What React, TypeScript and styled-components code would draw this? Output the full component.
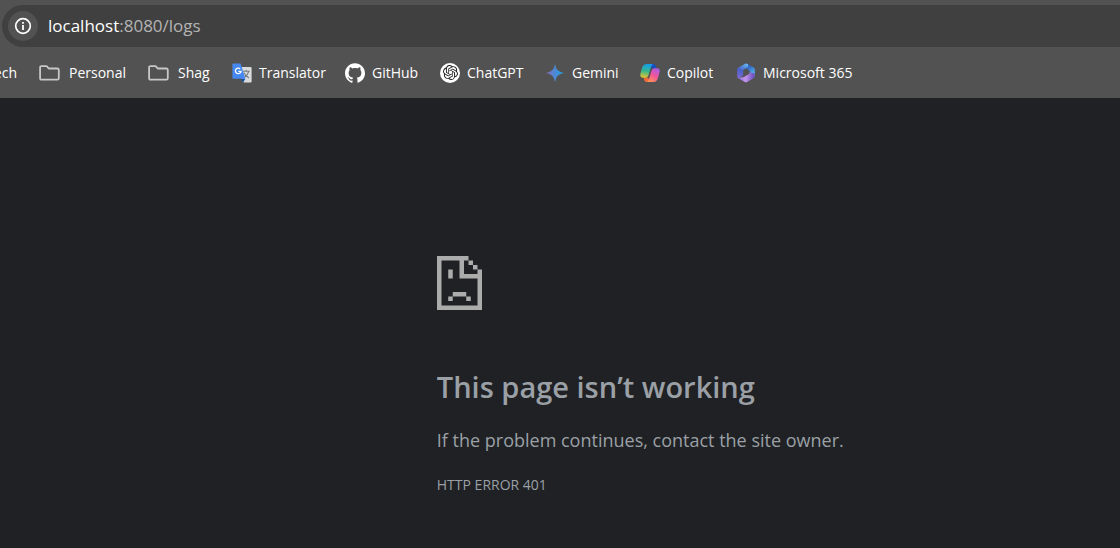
import React from "react";
import styled, { createGlobalStyle } from "styled-components";
import { SiGithub, SiOpenai } from "react-icons/si";

const GlobalStyle = createGlobalStyle`
  * { box-sizing: border-box; }
  body {
    margin: 0;
    background: #202124;
    font-family: "Segoe UI", "Open Sans", "Noto Sans", sans-serif;
  }
`;

const Browser = styled.div`
  min-height: 100vh;
  overflow-x: hidden;
`;

const Chrome = styled.header`
  background: #525252;
  padding-top: 5px;
`;

const AddressBar = styled.form`
  display: flex;
  align-items: center;
  gap: 10px;
  height: 42px;
  margin-left: 2px;
  padding-left: 6px;
  background: #404040;
  border-radius: 21px 0 0 21px;
`;

const SiteInfo = styled.button`
  display: grid;
  place-items: center;
  width: 30px;
  height: 30px;
  padding: 0;
  border: 0;
  border-radius: 50%;
  background: #525252;
  color: #fff;
`;

const Url = styled.div`
  color: #b4b4b4;
  font-size: 17px;
  line-height: 24px;
`;

const Host = styled.span`
  color: #fff;
`;

const Bookmarks = styled.nav`
  display: flex;
  align-items: center;
  height: 51px;
`;

const Bookmark = styled.a<{ $width: number; $gap?: number }>`
  display: flex;
  flex: 0 0 ${(p) => p.$width}px;
  align-items: center;
  gap: ${(p) => p.$gap ?? 7}px;
  color: #fff;
  font-size: 14px;
  line-height: 20px;
  white-space: nowrap;
  text-decoration: none;

  svg { flex: none; }
`;

const ClippedBookmark = styled(Bookmark)`
  justify-content: flex-end;
  padding-right: 22px;
  overflow: hidden;
`;

const Disc = styled.span`
  display: grid;
  place-items: center;
  width: 20px;
  height: 20px;
  border-radius: 50%;
  background: #fff;
  color: #222;
`;

const ErrorPage = styled.main`
  margin-left: 39%;
  padding: 158px 24px 24px 0;
  color: #9aa0a6;

  svg { display: block; }
`;

const Title = styled.h1`
  margin: 55px 0 0;
  font-size: 29px;
  font-weight: 600;
  line-height: 44px;
`;

const Message = styled.p`
  margin: 18px 0 0;
  font-size: 18px;
  line-height: 26px;
`;

const ErrorCode = styled.p`
  margin: 22px 0 0;
  font-size: 14px;
  line-height: 20px;
`;

const InfoIcon = () => (
  <svg width="18" height="18" viewBox="0 0 18 18" aria-hidden="true">
    <circle cx="9" cy="9" r="7.3" fill="none" stroke="currentColor" strokeWidth="1.7" />
    <path d="M8.1 8h1.8v5H8.1zM8.1 5h1.8v1.8H8.1z" fill="currentColor" />
  </svg>
);

const FolderIcon = () => (
  <svg width="21" height="16" viewBox="0 0 21 16" fill="none" stroke="#c7c7c7" strokeWidth="1.8" aria-hidden="true">
    <path d="M2.6 1.1h5l2.3 2.4h8.5q1.4 0 1.4 1.4v8.3q0 1.5-1.4 1.5H2.6q-1.5 0-1.5-1.5V2.6q0-1.5 1.5-1.5z" />
  </svg>
);

const TranslateIcon = () => (
  <svg width="20" height="20" viewBox="0 0 20 20" aria-hidden="true">
    <path d="M8 4h10.6q1 0 1 1v13.6q0 1-1 1h-7z" fill="#d9dadb" />
    <path d="M10.7 8.3h7M14.2 7v1.3M16.6 8.6q-1 4-4.2 5.8M12 9.6q1.3 3.4 5 5.4" fill="none" stroke="#737b80" strokeWidth="1.1" />
    <path d="M9.4 15.8h4L11 19.6z" fill="#174ea6" />
    <path d="M1.4.4h7.2l4.8 15.4h-12q-1 0-1-1V1.4q0-1 1-1z" fill="#4688f1" />
    <path d="M8.2 5.9A2.8 2.8 0 1 0 9 8.3H6.4" fill="none" stroke="#fff" strokeWidth="1.3" />
  </svg>
);

const GeminiIcon = () => (
  <svg width="20" height="20" viewBox="0 0 20 20" aria-hidden="true">
    <defs>
      <linearGradient id="gemini" x1="1" y1="10" x2="19" y2="10" gradientUnits="userSpaceOnUse">
        <stop offset="0" stopColor="#9168c0" />
        <stop offset=".4" stopColor="#5684d1" />
        <stop offset="1" stopColor="#1ba1e3" />
      </linearGradient>
    </defs>
    <path d="M10 1q1 8 9 9-8 1-9 9-1-8-9-9 8-1 9-9z" fill="url(#gemini)" />
  </svg>
);

const CopilotIcon = () => (
  <svg width="20" height="20" viewBox="0 0 20 20" aria-hidden="true">
    <defs>
      <linearGradient id="copilotLeft" x1="6" y1="1" x2="4" y2="15" gradientUnits="userSpaceOnUse">
        <stop offset="0" stopColor="#159ee8" />
        <stop offset=".5" stopColor="#35b78d" />
        <stop offset="1" stopColor="#f1c82a" />
      </linearGradient>
      <linearGradient id="copilotRight" x1="17" y1="5" x2="9" y2="19" gradientUnits="userSpaceOnUse">
        <stop offset="0" stopColor="#a75bea" />
        <stop offset=".5" stopColor="#f0569b" />
        <stop offset="1" stopColor="#ff9750" />
      </linearGradient>
    </defs>
    <path d="M10 1h3.4q1.6 0 2.1 1.6l.8 2.7h-4.5z" fill="#194ec4" />
    <path d="M10 19H6.6q-1.6 0-2.1-1.6l-.9-3h4.6z" fill="#f06b38" />
    <path d="M6.4 1h6.8q-1.4.2-2 2.2L8.6 12q-.8 2.7-3 2.7H2.8Q-.4 14.7.4 11q.8-4 2.2-7.4Q3.7 1 6.4 1z" fill="url(#copilotLeft)" />
    <path d="M13.6 19H6.8q1.4-.2 2-2.2L11.4 8q.8-2.7 3-2.7h2.8q3.2 0 2.4 3.7-.8 4-2.2 7.4Q16.3 19 13.6 19z" fill="url(#copilotRight)" />
  </svg>
);

const MicrosoftIcon = () => (
  <svg width="20" height="20" viewBox="0 0 20 20" aria-hidden="true">
    <defs>
      <linearGradient id="msLeft" x1="10" y1="1" x2="3" y2="15" gradientUnits="userSpaceOnUse">
        <stop offset="0" stopColor="#62b4ee" />
        <stop offset=".5" stopColor="#4a62c8" />
        <stop offset="1" stopColor="#7a68d6" />
      </linearGradient>
      <linearGradient id="msRight" x1="18" y1="13" x2="11" y2="3" gradientUnits="userSpaceOnUse">
        <stop offset="0" stopColor="#58c8f4" />
        <stop offset="1" stopColor="#2f56bc" />
      </linearGradient>
      <linearGradient id="msBase" x1="2" y1="14" x2="17" y2="14" gradientUnits="userSpaceOnUse">
        <stop offset="0" stopColor="#8a6cdc" />
        <stop offset=".5" stopColor="#c294ee" />
        <stop offset="1" stopColor="#7457c4" />
      </linearGradient>
    </defs>
    <path d="M9.6.4q.9-.1 1.7.4l6.5 3.8q1 .6 1 1.8v6.2L13.6 9.4V7.6L9 5z" fill="url(#msRight)" />
    <path d="M9.6.4 2.2 4.7q-1 .6-1 1.8v7q0 1.2 1 1.8l5-2.8V8q0-1.2 1-1.8l4-2.4V1.3Q11 .3 9.6.4z" fill="url(#msLeft)" />
    <path d="M1.6 14.8 8.8 19q1.2.7 2.4 0l6.6-3.9q1-.6 1-1.8v-2.8L13.6 9v1.6L8 14z" fill="url(#msBase)" />
  </svg>
);

const SadPageIcon = () => (
  <svg width="45" height="54" viewBox="0 0 20 24" fill="#acacac" aria-hidden="true">
    <path d="M0 0h14v2h-2v6h6V6h2v18H0zM2 2v20h16V10h-8V2z" fillRule="evenodd" />
    <path d="M14 2h2v2h-2zM16 4h2v2h-2zM5 6h2v4H5zM7 16h6v2H7zM5 18h2v2H5zM13 18h2v2h-2z" />
  </svg>
);

export default function App() {
  return (
    <Browser>
      <GlobalStyle />
      <Chrome>
        <AddressBar>
          <SiteInfo type="button" aria-label="View site information"><InfoIcon /></SiteInfo>
          <Url><Host>localhost</Host>:8080/logs</Url>
        </AddressBar>
        <Bookmarks aria-label="Bookmarks">
          <ClippedBookmark href="#tech" $width={39}>Tech</ClippedBookmark>
          <Bookmark href="#personal" $width={109} $gap={9}><FolderIcon />Personal</Bookmark>
          <Bookmark href="#shag" $width={84} $gap={9}><FolderIcon />Shag</Bookmark>
          <Bookmark href="#translator" $width={113}><TranslateIcon />Translator</Bookmark>
          <Bookmark href="#github" $width={95}><SiGithub size={20} />GitHub</Bookmark>
          <Bookmark href="#chatgpt" $width={105}><Disc><SiOpenai size={15} /></Disc>ChatGPT</Bookmark>
          <Bookmark href="#gemini" $width={95}><GeminiIcon />Gemini</Bookmark>
          <Bookmark href="#copilot" $width={96}><CopilotIcon />Copilot</Bookmark>
          <Bookmark href="#microsoft365" $width={119}><MicrosoftIcon />Microsoft 365</Bookmark>
        </Bookmarks>
      </Chrome>
      <ErrorPage>
        <SadPageIcon />
        <Title>This page isn’t working</Title>
        <Message>If the problem continues, contact the site owner.</Message>
        <ErrorCode>HTTP ERROR 401</ErrorCode>
      </ErrorPage>
    </Browser>
  );
}
